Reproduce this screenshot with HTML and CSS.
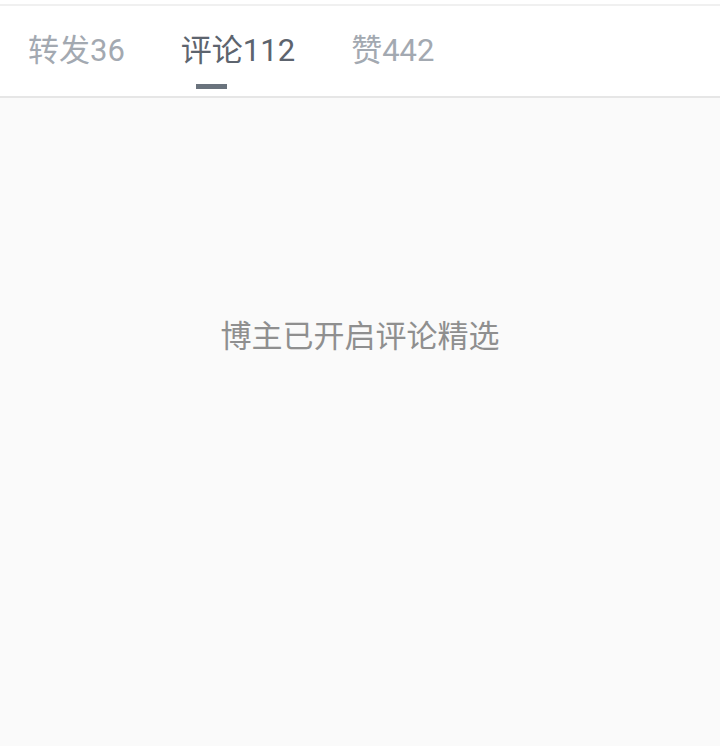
FILE: index.html
```html
<!DOCTYPE html>
<html lang="zh">
<head>
<meta charset="utf-8">
<link rel="stylesheet" href="styles.css">
</head>
<body>
<div class="page">
  <div class="top-gap"></div>
  <nav class="tabs">
    <div class="tab">转发36</div>
    <div class="tab active"><span class="cjk">评论</span>112</div>
    <div class="tab">赞442</div>
  </nav>
  <main class="content">
    <p class="notice">博主已开启评论精选</p>
  </main>
</div>
</body>
</html>
```
FILE: styles.css
```css
html, body {
  margin: 0;
  padding: 0;
  height: 100%;
}
body {
  font-family: Roboto, "Noto Sans CJK SC", sans-serif;
  background: #fafafa;
}
.page {
  display: flex;
  flex-direction: column;
  height: 746px;
}
.top-gap {
  height: 4px;
  background: #ffffff;
  border-bottom: 2px solid #f0f0f0;
}
.tabs {
  display: flex;
  align-items: center;
  gap: 56px;
  height: 92px;
  padding-left: 28px;
  background: #ffffff;
  border-bottom: 2px solid #e6e6e6;
  box-sizing: border-box;
}
.tab {
  font-size: 31px;
  line-height: 1;
  color: #a3a9b1;
  margin-top: -2px;
}
.tab.active {
  color: #5d646e;
}
.cjk {
  position: relative;
}
.tab.active .cjk::after {
  content: "";
  position: absolute;
  left: 50%;
  top: 52px;
  width: 31px;
  height: 5px;
  margin-left: -15.5px;
  background: #6a737d;
}
.content {
  flex: 1;
  display: flex;
  justify-content: center;
  background: #fafafa;
}
.notice {
  margin: 220px 0 0;
  font-size: 31px;
  line-height: 1;
  color: #8f8f8f;
  font-family: "Noto Sans CJK SC", sans-serif;
}
```
